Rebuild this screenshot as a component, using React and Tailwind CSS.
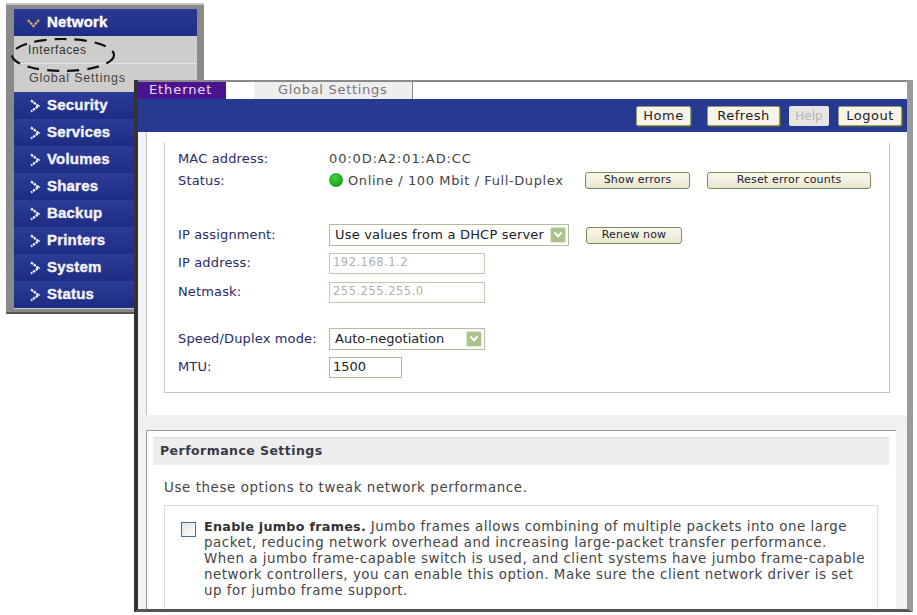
const menuItems = ['Security', 'Services', 'Volumes', 'Shares', 'Backup', 'Printers', 'System', 'Status'];

const Chevron = () => (
  <svg width="12" height="14" viewBox="0 0 12 14" className="shrink-0">
    <path d="M2 1.5 L9.5 7 L2 12.5" fill="none" stroke="#f2f2f8" strokeWidth="2.2" strokeDasharray="2.6 0.8" />
  </svg>
);

const SelectArrow = () => (
  <span className="w-[16px] h-[16px] rounded-[2px] bg-[#a9c48a] border border-[#dfe8cf] flex items-center justify-center shrink-0">
    <svg width="10" height="8" viewBox="0 0 10 8">
      <path d="M1.5 1.5 L5 5.5 L8.5 1.5" fill="none" stroke="#fff" strokeWidth="2" />
    </svg>
  </span>
);

const TopButton = ({ children, className = '' }) => (
  <div className={`h-[20px] flex items-center justify-center rounded-[2px] bg-[#f7f4e8] border border-[#8f9a70] shadow-[1px_1px_0_#55603f] text-[13px] tracking-[0.5px] text-[#1c1c2a] ${className}`}>
    {children}
  </div>
);

const SmallButton = ({ children, className = '' }) => (
  <div className={`h-[17px] flex items-center justify-center rounded-[3px] bg-gradient-to-b from-[#fbf9ee] to-[#e9e5cf] border border-[#7d8a58] text-[11px] tracking-[0.2px] text-[#1c1c2a] ${className}`}>
    {children}
  </div>
);

const Label = ({ children }) => <div className="w-[151px] shrink-0 text-[#2a2a66] tracking-[0.15px]">{children}</div>;

const SideMenu = () => (
  <div className="absolute left-[6px] top-[3px] w-[198px] h-[311px] bg-[#8a8a8a] border-t-[2px] border-[#c4c4c4] pl-[8px] pr-[7px] pt-[4px] pb-[5px] shadow-[inset_0_-2px_0_#555]">
    <div className="relative font-['Liberation_Sans',sans-serif] h-full bg-[#cfcccc]">
      <div className="h-[27px] flex items-center pl-[13px] gap-[7px] bg-gradient-to-b from-[#2a3a94] to-[#1f2d84] text-white font-bold text-[15px] tracking-[0.2px] [-webkit-text-stroke:0.4px_currentColor]">
        <svg width="13" height="10" viewBox="0 0 13 10" className="shrink-0">
          <path d="M1 2 L6.5 8 L12 2" fill="none" stroke="#e8a860" strokeWidth="2.2" strokeDasharray="2.6 0.8" />
        </svg>
        Network
      </div>
      <div className="h-[27px] mt-[1px] flex items-center pl-[14px] bg-[#cfcccc] border-b border-[#e4e2e2] text-[12px] tracking-[0.6px] text-[#333]">Interfaces</div>
      <div className="h-[28px] flex items-center pl-[15px] bg-[#cfcccc] text-[12.5px] tracking-[0.8px] text-[#444]">Global Settings</div>
      {menuItems.map(item => (
        <div key={item} className="h-[27px] flex items-center pl-[15px] gap-[6px] bg-gradient-to-b from-[#2b3b98] to-[#1e2c82] text-[#f2f2f8] font-bold text-[15px] tracking-[0.2px] [-webkit-text-stroke:0.4px_currentColor]">
          <Chevron />
          {item}
        </div>
      ))}
    </div>
  </div>
);

const DashedEllipse = () => (
  <svg className="absolute left-[8px] top-[34px]" width="112" height="42" viewBox="0 0 112 42">
    <ellipse cx="55" cy="21" rx="51" ry="16" fill="none" stroke="#111" strokeWidth="2.2" strokeDasharray="12 8" />
  </svg>
);

const NetworkWindow = () => (
  <div className="absolute left-[134px] top-[80px] w-[779px] h-[532px] bg-white overflow-hidden border-l-[4px] border-l-[#333] border-r-[6px] border-r-[#9a9a9a] border-b-[3px] border-b-[#555] font-['DejaVu_Sans',sans-serif] text-[13px]">
    <div className="absolute top-0 left-0 right-0 h-[2px] bg-[#8a8a8a]" />

    <div className="h-[19px] flex text-[13px] leading-[19px]">
      <div className="w-[88px] bg-[#4a1390] text-[#ecdcf8] pl-[11px] tracking-[0.9px]">Ethernet</div>
      <div className="w-[28px]" />
      <div className="w-[159px] bg-[#eeeeee] border-r border-[#888] text-[#777] pl-[24px] tracking-[0.7px]">Global Settings</div>
    </div>

    <div className="h-[33px] bg-[#263a92] flex items-center justify-end pr-[5px]">
      <TopButton className="w-[55px] mr-[16px]">Home</TopButton>
      <TopButton className="w-[73px] mr-[9px]">Refresh</TopButton>
      <div className="w-[40px] h-[20px] mr-[9px] flex items-center justify-center rounded-[2px] bg-[#e8e6e2] text-[#b5b5b5] text-[12px]">Help</div>
      <TopButton className="w-[64px]">Logout</TopButton>
    </div>

    <div className="h-[283px] bg-[#f2f2f5]">
      <div className="h-full ml-[8px] bg-white border-l-[1px] border-[#bfbfc4] pt-[11px] pl-[17px]">
        <div className="h-[250px] mr-[17px] border-l border-r border-b border-[#c4c4c8] pl-[13px] pt-[7px] text-[#333]">
          <div className="flex h-[17px] items-center">
            <Label>MAC address:</Label>
            <div className="text-[#444] tracking-[0.9px]">00:0D:A2:01:AD:CC</div>
          </div>
          <div className="flex h-[20px] mt-[4px] items-center">
            <Label>Status:</Label>
            <span className="w-[14px] h-[14px] rounded-full bg-[radial-gradient(circle_at_40%_35%,#3fd43f,#0b8a0b)] mr-[5px] -mt-[3px] shrink-0" />
            <div className="w-[217px] shrink-0 text-[#444] tracking-[0.6px] whitespace-nowrap">Online / 100 Mbit / Full-Duplex</div>
            <SmallButton className="w-[105px] ml-[20px] -mt-[2px]">Show errors</SmallButton>
            <SmallButton className="w-[164px] ml-[17px] -mt-[2px]">Reset error counts</SmallButton>
          </div>

          <div className="flex h-[22px] mt-[33px] items-center">
            <Label>IP assignment:</Label>
            <div className="w-[240px] h-[22px] border border-[#b5b9a0] flex items-center justify-between pl-[5px] pr-[2px] text-[#222] tracking-[0.2px] whitespace-nowrap">
              Use values from a DHCP server
              <SelectArrow />
            </div>
            <SmallButton className="w-[96px] ml-[17px]">Renew now</SmallButton>
          </div>
          <div className="flex h-[22px] mt-[6px] items-center">
            <Label>IP address:</Label>
            <div className="w-[156px] h-[21px] border border-[#c4c8b0] flex items-center pl-[3px] text-[#b0b0b0] text-[11.5px] tracking-[0.5px]">192.168.1.2</div>
          </div>
          <div className="flex h-[22px] mt-[7px] items-center">
            <Label>Netmask:</Label>
            <div className="w-[156px] h-[21px] border border-[#c4c8b0] flex items-center pl-[3px] text-[#b0b0b0] text-[11.5px] tracking-[0.5px]">255.255.255.0</div>
          </div>

          <div className="flex h-[22px] mt-[25px] items-center">
            <Label>Speed/Duplex mode:</Label>
            <div className="w-[156px] h-[22px] border border-[#b5b9a0] flex items-center justify-between pl-[5px] pr-[2px] text-[#222]">
              Auto-negotiation
              <SelectArrow />
            </div>
          </div>
          <div className="flex h-[22px] mt-[6px] items-center">
            <Label>MTU:</Label>
            <div className="w-[73px] h-[21px] border border-[#b5b9a0] flex items-center pl-[3px] text-[#222]">1500</div>
          </div>
        </div>
      </div>
    </div>

    <div className="h-[15px] bg-[#f0f0f3]" />

    <div className="bg-[#f2f2f5] h-[200px]">
      <div className="h-full ml-[8px] mr-[11px] border-t border-l border-[#9a9a9f] pt-[6px] pl-[6px] pr-[7px] bg-white text-[#3a3a3a]">
        <div className="h-[28px] bg-[#eeeef0] border-t border-[#dcdcdc] flex items-center pl-[7px] font-bold text-[12.5px] tracking-[0.45px] text-[#3a3a44]">Performance Settings</div>
        <div className="mt-[14px] ml-[11px] h-[18px] text-[13.4px] tracking-[0.6px] leading-[18px] text-[#444] whitespace-nowrap">Use these options to tweak network performance.</div>
        <div className="mt-[8px] ml-[11px] mr-[11px] h-[110px] border border-[#dcdcdc] flex pl-[16px] pt-[13px]">
          <span className="w-[15px] h-[15px] mt-[3px] shrink-0 border border-[#4a6a8a] bg-gradient-to-br from-[#dfe3e8] to-white" />
          <div className="ml-[8px] leading-[16px] text-[13.4px] tracking-[0.52px] text-[#444] whitespace-nowrap">
            <b className="text-[#333] text-[12.7px] tracking-[0.3px]">Enable jumbo frames.</b> Jumbo frames allows combining of multiple packets into one large<br />
            packet, reducing network overhead and increasing large-packet transfer performance.<br />
            When a jumbo frame-capable switch is used, and client systems have jumbo frame-capable<br />
            network controllers, you can enable this option. Make sure the client network driver is set<br />
            up for jumbo frame support.
          </div>
        </div>
      </div>
    </div>
  </div>
);

export default function App() {
  return (
    <div className="relative w-[917px] h-[615px] bg-white overflow-hidden">
      <SideMenu />
      <DashedEllipse />
      <NetworkWindow />
    </div>
  );
}
